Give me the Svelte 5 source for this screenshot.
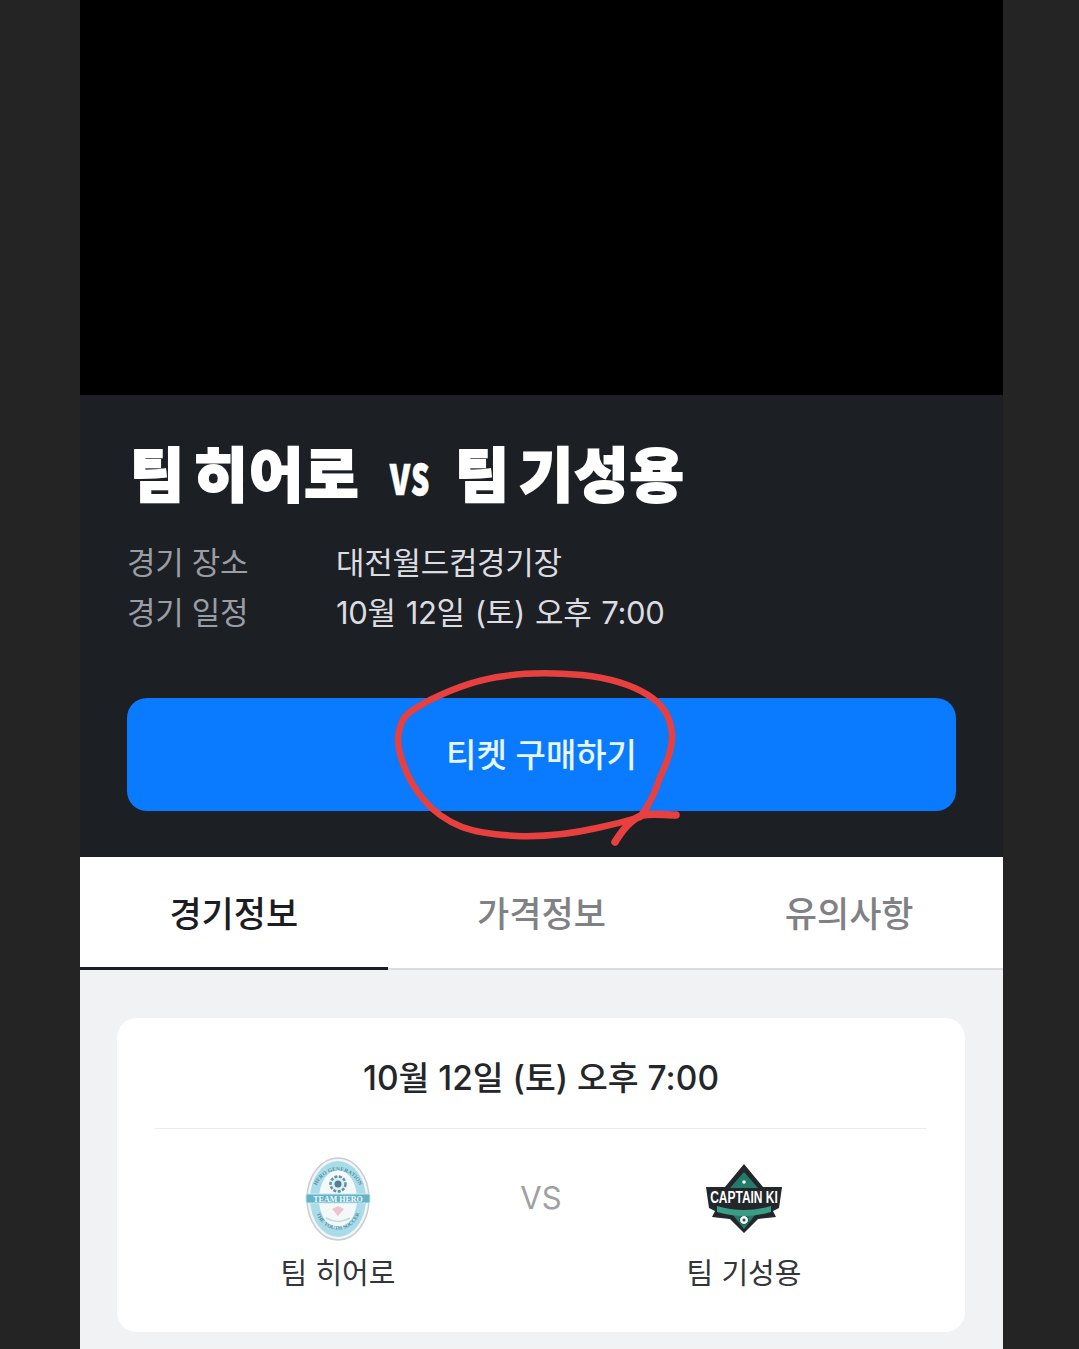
<script>
  const tabs = [
    { label: '경기정보', active: true },
    { label: '가격정보', active: false },
    { label: '유의사항', active: false }
  ];

  const matchDate = '10월 12일 (토) 오후 7:00';
</script>

<div class="page">
  <main class="phone">
    <div class="video"></div>

    <section class="summary">
      <h1 class="title">
        <span>팀 히어로</span>
        <span class="title-vs">vs</span>
        <span>팀 기성용</span>
      </h1>

      <dl class="info">
        <dt>경기 장소</dt>
        <dd>대전월드컵경기장</dd>
        <dt>경기 일정</dt>
        <dd>{matchDate}</dd>
      </dl>

      <button class="buy-button">티켓 구매하기</button>
    </section>

    <nav class="tabs">
      {#each tabs as tab}
        <div class="tab" class:active={tab.active}>{tab.label}</div>
      {/each}
    </nav>

    <section class="content">
      <div class="card">
        <div class="card-date">{matchDate}</div>
        <div class="teams">
          <div class="team">
            <svg class="logo" viewBox="0 0 84 84" aria-hidden="true">
              <ellipse cx="42" cy="42" rx="31" ry="41" fill="#f3f6f7" stroke="#c9ced2" stroke-width="1.5" />
              <ellipse cx="42" cy="42" rx="28" ry="38" fill="#a9dbe8" />
              <ellipse cx="42" cy="42" rx="19" ry="29" fill="#f4f8f9" />
              <path id="hero-top" d="M19 33 A24 27 0 0 1 65 33" fill="none" />
              <text class="logo-arc"><textPath href="#hero-top" startOffset="50%" text-anchor="middle">HERO GENERATION</textPath></text>
              <path id="hero-bottom" d="M20 55 A23 25 0 0 0 64 55" fill="none" />
              <text class="logo-arc"><textPath href="#hero-bottom" startOffset="50%" text-anchor="middle">THE YOUTH SOCCER</textPath></text>
              <circle cx="42" cy="27" r="7.5" fill="#dfeef2" stroke="#5d93a6" stroke-width="2.5" stroke-dasharray="3 1.5" />
              <circle cx="42" cy="27" r="3.5" fill="#4d7f92" />
              <rect x="10" y="37" width="64" height="9" rx="1" fill="#62b4c6" stroke="#cfe6ec" stroke-width="1" />
              <text class="logo-band" x="42" y="44.5" text-anchor="middle">TEAM HERO</text>
              <path d="M36 52 L42 49 L48 52 L42 59 Z" fill="#f0c4cf" />
              <path d="M30 61 Q42 68 54 61" fill="none" stroke="#bfdbe3" stroke-width="1.5" />
            </svg>
            <div class="team-name">팀 히어로</div>
          </div>
          <div class="versus">VS</div>
          <div class="team">
            <svg class="logo" viewBox="0 0 84 84" aria-hidden="true">
              <path d="M42 7 L61 30 L80 30 L77 51 L71 54 L74 60 L56 62 L42 76 L28 62 L10 60 L13 54 L7 51 L4 30 L23 30 Z" fill="#23262a" />
              <path d="M42 15 L56 31 L28 31 Z" fill="#237c69" />
              <circle cx="42" cy="25" r="1.8" fill="#fff" />
              <path d="M31 58 L53 58 L42 72 Z" fill="#237c69" />
              <circle cx="42" cy="63" r="4.5" fill="#f4f7f6" stroke="#1c4b40" stroke-width="1" />
              <circle cx="42" cy="63" r="1.5" fill="#1c4b40" />
              <path d="M15 49 Q42 57 69 49 L69 55 Q42 63 15 55 Z" fill="#3a9d85" />
              <text class="logo-captain" transform="translate(42 46) scale(1 1.4)" text-anchor="middle">CAPTAIN KI</text>
            </svg>
            <div class="team-name">팀 기성용</div>
          </div>
        </div>
      </div>
    </section>

    <svg class="scribble" viewBox="0 0 923 1349" aria-hidden="true">
      <g transform="translate(-80 0)">
        <path d="M640 817 C651 803 655 791 659 780 C667 762 673 748 672 733 C670 715 662 704 648 695 C632 685 610 678 582 675 C560 673 530 672 505 676 C480 679 452 689 430 700 C418 707 405 713 402 722 C397 733 397 745 401 757 C405 771 413 787 424 800 C434 812 447 821 462 827 C478 833 497 835 517 836 C545 837 575 833 597 828 C612 825 627 821 640 817" />
        <path class="scribble-tail" d="M676 815 C665 815 652 813 643 815 C633 818 623 829 615 842" />
      </g>
    </svg>
  </main>
</div>

<style>
  :global(body) {
    margin: 0;
    background: #242424;
  }

  .page {
    height: 1349px;
    overflow: hidden;
    padding-left: 80px;
    background: #242424;
    font-family: Inter, "Noto Sans CJK KR", "Noto Sans", sans-serif;
  }

  .phone {
    position: relative;
    width: 923px;
    height: 1349px;
    overflow: hidden;
    background: #f1f2f4;
  }

  .video {
    height: 395px;
    background: #000;
  }

  .summary {
    height: 462px;
    box-sizing: border-box;
    padding: 41px 47px 0;
    background: #1c1f24;
  }

  .title {
    display: flex;
    align-items: center;
    height: 72px;
    margin: 0 0 0 3px;
    color: #fff;
    font-family: "Noto Sans CJK KR", sans-serif;
    font-size: 59px;
    font-weight: 900;
    line-height: 72px;
    letter-spacing: 1px;
    word-spacing: -6px;
    white-space: nowrap;
    -webkit-text-stroke: 1.8px #fff;
  }

  .title-vs {
    display: inline-block;
    margin: 0 25px 0 28px;
    font-size: 38px;
    letter-spacing: 0;
    transform: scale(0.95, 1.45);
    -webkit-text-stroke: 0.4px #fff;
  }

  .info {
    display: grid;
    grid-template-columns: 209px 1fr;
    grid-auto-rows: 50px;
    align-items: center;
    margin: 27px 0 0;
    font-size: 31px;
    letter-spacing: -0.3px;
  }

  .info dt {
    color: #9a9da3;
  }

  .info dd {
    margin: 0;
    color: #dcdde0;
    word-spacing: 1.5px;
  }

  .buy-button {
    display: block;
    width: 829px;
    height: 113px;
    margin-top: 63px;
    padding: 0 0 4px;
    border: none;
    border-radius: 20px;
    background: #0a7aff;
    color: #e6f6ff;
    font-family: inherit;
    font-size: 33px;
    font-weight: 500;
  }

  .tabs {
    display: flex;
    height: 113px;
    box-sizing: border-box;
    border-bottom: 2px solid #dcdcde;
    background: #fff;
  }

  .tab {
    position: relative;
    flex: 1;
    color: #7f8185;
    font-size: 35px;
    font-weight: 500;
    line-height: 115px;
    text-align: center;
  }

  .tab.active {
    margin-bottom: -2px;
    box-shadow: inset 0 -3px 0 #1b1d22;
    color: #1b1d22;
  }

  .content {
    padding: 48px 38px 0 37px;
  }

  .card {
    height: 314px;
    box-sizing: border-box;
    padding: 0 38px;
    border-radius: 20px;
    background: #fff;
  }

  .card-date {
    height: 110px;
    border-bottom: 1px solid #eceded;
    color: #24262b;
    font-size: 33.5px;
    font-weight: 500;
    line-height: 120px;
    text-align: center;
  }

  .teams {
    display: grid;
    grid-template-columns: repeat(3, 203px);
    justify-content: center;
    margin-top: 28px;
  }

  .team {
    display: flex;
    flex-direction: column;
    align-items: center;
  }

  .logo {
    width: 84px;
    height: 84px;
  }

  .team-name {
    margin-top: 11px;
    color: #33353a;
    font-size: 29px;
    line-height: 44px;
  }

  .versus {
    padding-top: 19px;
    color: #9ea0a4;
    font-size: 31px;
    line-height: 44px;
    text-align: center;
  }

  .logo-arc {
    fill: #4f8ea3;
    font-size: 5.5px;
    font-weight: 700;
    font-family: "Liberation Serif", serif;
  }

  .logo-band {
    fill: #eef8fa;
    font-size: 8px;
    font-weight: 700;
    font-family: "Liberation Serif", serif;
  }

  .logo-captain {
    fill: #fff;
    font-size: 12px;
    font-weight: 700;
    font-family: "Liberation Sans", sans-serif;
  }

  .scribble {
    position: absolute;
    top: 0;
    left: 0;
    width: 923px;
    height: 1349px;
    fill: none;
    stroke: #e8403f;
    stroke-width: 6.5;
    stroke-linecap: round;
    stroke-linejoin: round;
    pointer-events: none;
  }

  .scribble-tail {
    stroke-width: 7.5;
  }
</style>
